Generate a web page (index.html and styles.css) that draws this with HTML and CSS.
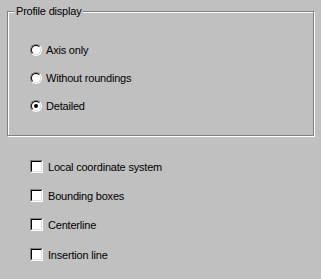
FILE: index.html
```html
<!DOCTYPE html>
<html lang="en">
<head>
  <meta charset="UTF-8">
  <title>Profile display</title>
  <link rel="stylesheet" href="styles.css">
</head>
<body>
  <div class="page">

    <!-- Profile display group -->
    <div class="group">
      <div class="group-title">Profile display</div>
      <div class="options">
        <div class="option"><span class="radio"></span><span class="label">Axis only</span></div>
        <div class="option"><span class="radio"></span><span class="label">Without roundings</span></div>
        <div class="option"><span class="radio checked"></span><span class="label">Detailed</span></div>
      </div>
    </div>

    <!-- Extra display flags -->
    <div class="checks">
      <div class="check-row"><span class="checkbox"></span><span class="label">Local coordinate system</span></div>
      <div class="check-row"><span class="checkbox"></span><span class="label">Bounding boxes</span></div>
      <div class="check-row"><span class="checkbox"></span><span class="label">Centerline</span></div>
      <div class="check-row"><span class="checkbox"></span><span class="label">Insertion line</span></div>
    </div>

  </div>
</body>
</html>
```

FILE: styles.css
```css
/* Reset */
* {
  margin: 0;
  padding: 0;
  box-sizing: border-box;
}

html, body {
  width: 100%;
  height: 100%;
  background: #c0c0c0;
  overflow: hidden;
}

body {
  font-family: 'Liberation Sans', Arial, sans-serif;
  font-size: 11px;
  letter-spacing: -0.2px;
  color: #000;
}

.page {
  padding: 11px 7px 0 7px;
}

/* Etched group box */
.group {
  position: relative;
  width: 307px;
  height: 125px;
  border: 1px solid #808080;
  box-shadow: 1px 1px 0 #fff, inset 1px 1px 0 #fff;
}

.group-title {
  position: absolute;
  top: -7px;
  left: 6px;
  padding: 0 2px;
  line-height: 13px;
  background: #c0c0c0;
}

.options {
  display: flex;
  flex-direction: column;
  gap: 12px;
  padding: 30px 0 0 22px;
}

.option {
  display: flex;
  align-items: center;
  height: 16px;
  gap: 4px;
}

/* Classic radio button */
.radio {
  position: relative;
  flex: none;
  width: 12px;
  height: 12px;
  border-radius: 50%;
  border: 1px solid;
  border-color: #808080 #fff #fff #808080;
}

.radio::before {
  content: '';
  position: absolute;
  inset: 0;
  border-radius: 50%;
  border: 1px solid;
  border-color: #000 #dfdfdf #dfdfdf #000;
  background: #fff;
}

.radio.checked::after {
  content: '';
  position: absolute;
  top: 3px;
  left: 3px;
  width: 4px;
  height: 4px;
  border-radius: 50%;
  background: #000;
}

/* Checkbox list */
.checks {
  display: flex;
  flex-direction: column;
  gap: 16px;
  margin-top: 24px;
  padding-left: 23px;
}

.check-row {
  display: flex;
  align-items: center;
  height: 13px;
  gap: 5px;
}

.check-row:last-child {
  margin-top: 1px;
}

.checkbox {
  position: relative;
  flex: none;
  width: 13px;
  height: 13px;
  border: 1px solid;
  border-color: #808080 #fff #fff #808080;
}

.checkbox::before {
  content: '';
  position: absolute;
  inset: 0;
  border: 1px solid;
  border-color: #000 #dfdfdf #dfdfdf #000;
  background: #fff;
}

.label {
  white-space: nowrap;
}
```
